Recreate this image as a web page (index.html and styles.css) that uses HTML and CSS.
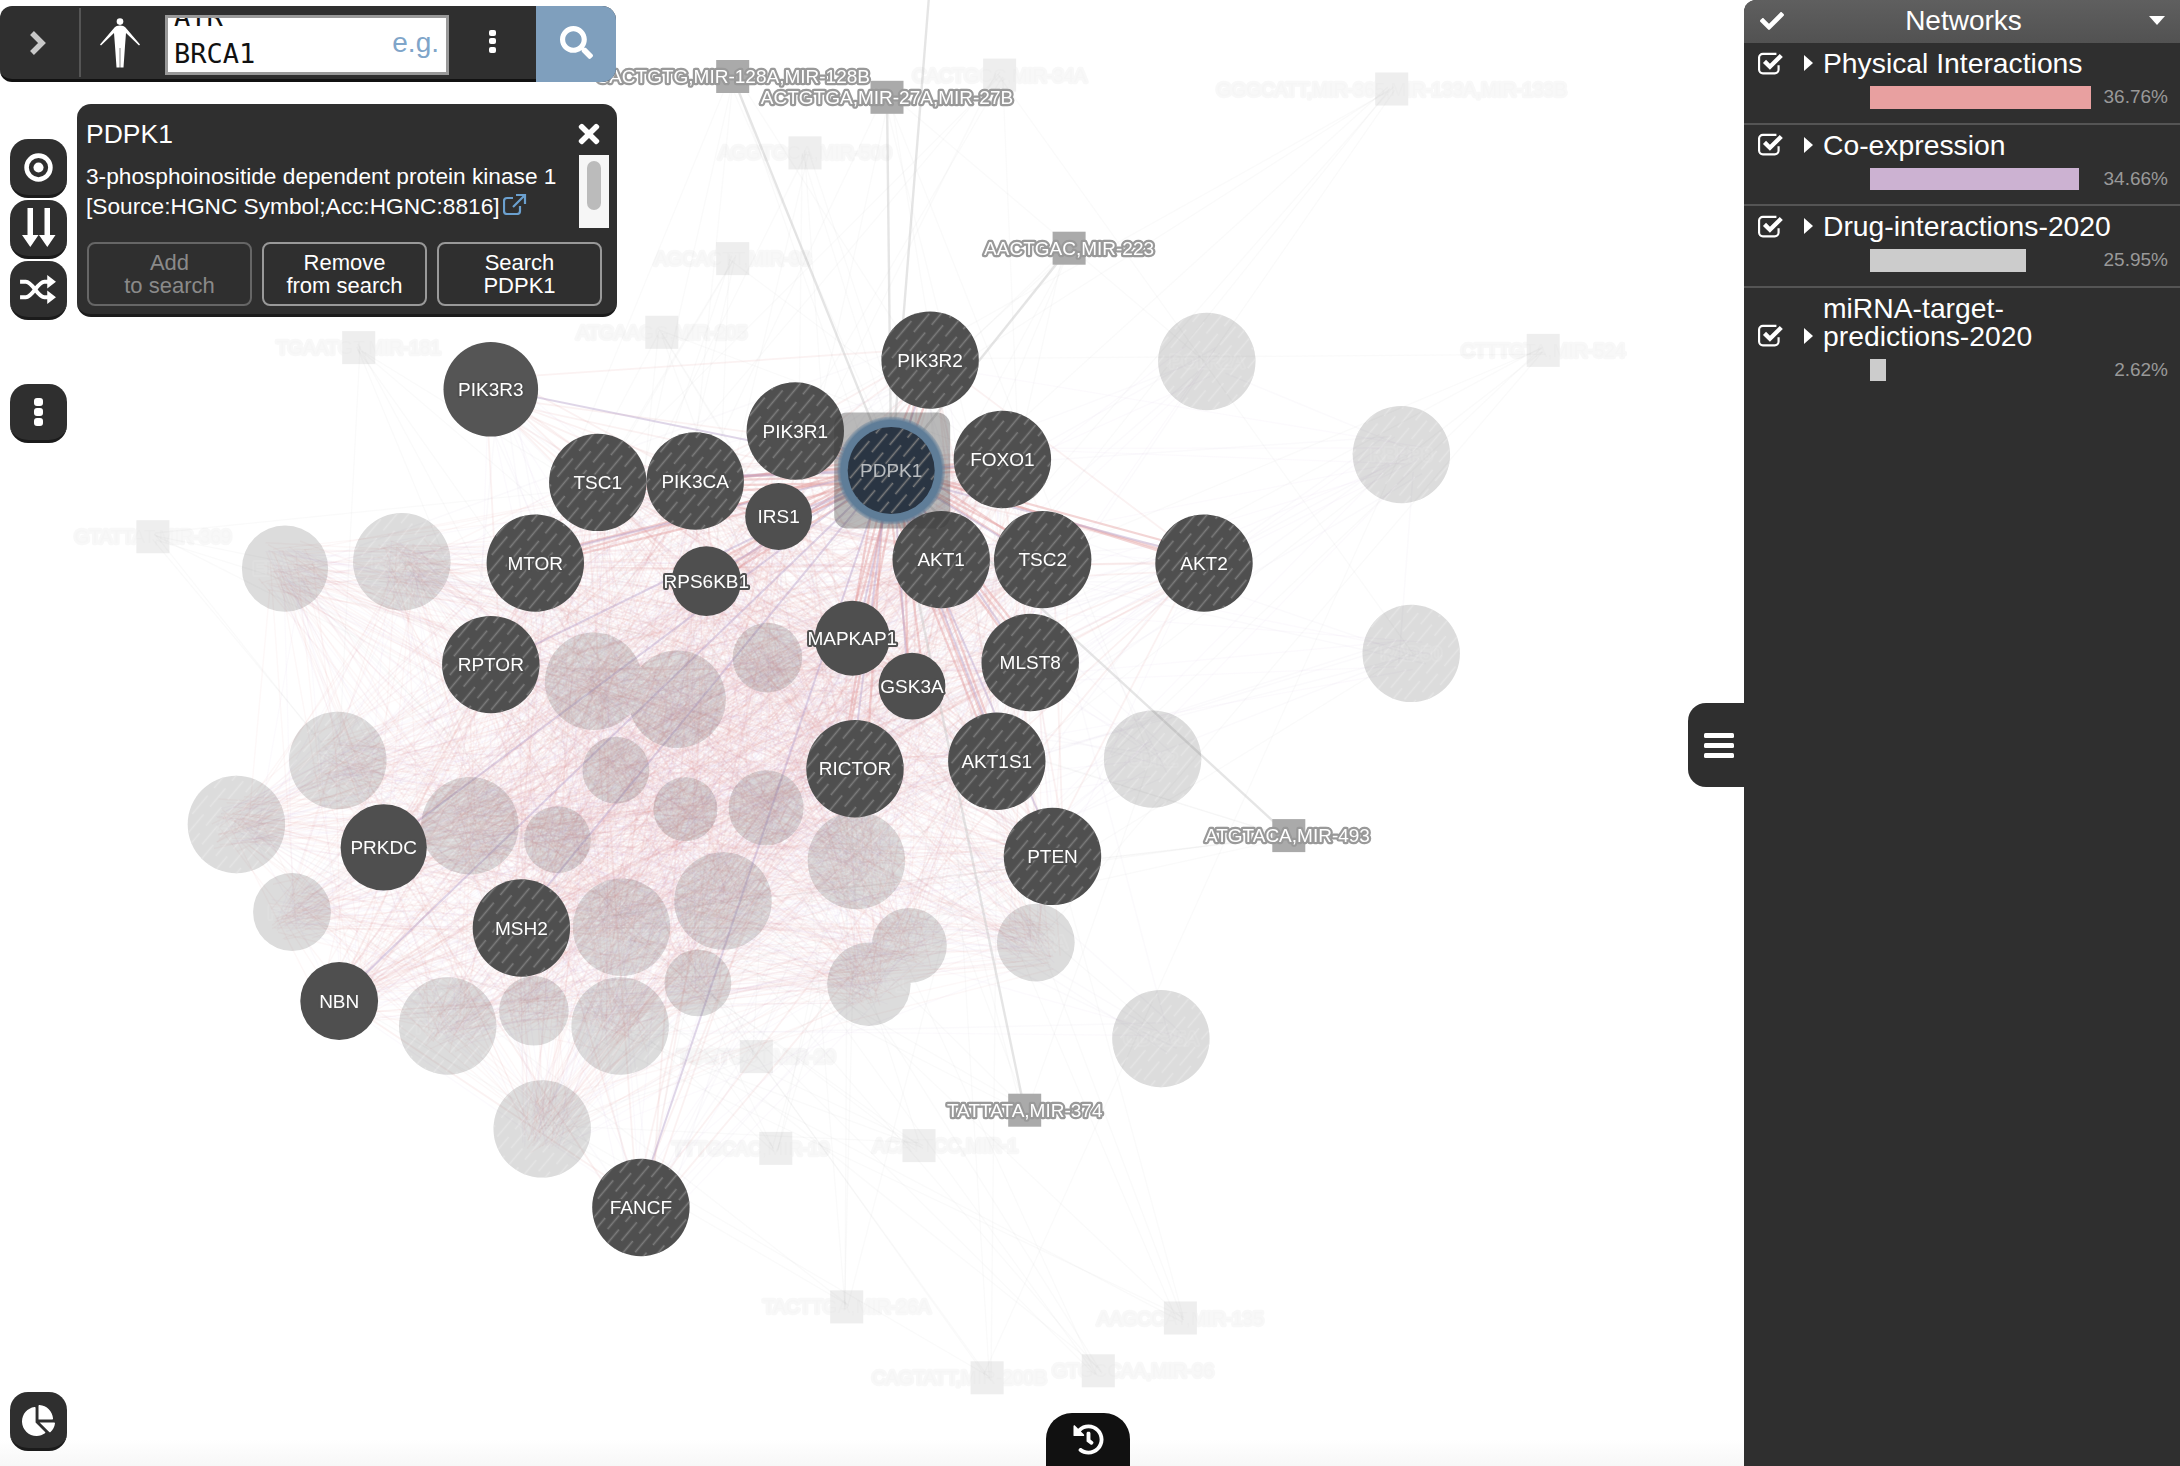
FILE: index.html
```html
<!DOCTYPE html>
<html lang="en">
<head>
<meta charset="utf-8">
<title>Network viewer</title>
<link rel="stylesheet" href="styles.css">
</head>
<body>
<div class="app">
  <main class="canvas">
    <svg id="graph" class="graph" width="1744" height="1466" xmlns="http://www.w3.org/2000/svg">
      <defs>
        <pattern id="hatch" width="18" height="34" patternUnits="userSpaceOnUse" patternTransform="rotate(40)">
          <line class="hatch-line" x1="4.5" y1="0" x2="4.5" y2="24"></line>
          <line class="hatch-line" x1="13.5" y1="17" x2="13.5" y2="41"></line>
          <line class="hatch-line" x1="13.5" y1="-17" x2="13.5" y2="7"></line>
        </pattern>
        <radialGradient id="halo">
          <stop offset="0.8" stop-color="#5f7d98"></stop>
          <stop offset="0.93" stop-color="#5f7d98"></stop>
          <stop offset="1" stop-color="#5f7d98" stop-opacity="0.25"></stop>
        </radialGradient>
      </defs>
    </svg>

    <div class="top-bar">
      <button class="bar-toggle" aria-label="Expand">
        <svg class="icon-chevron" viewBox="0 0 18 26"><path d="M3 3l10 10L3 23"></path></svg>
      </button>
      <button class="bar-organism" aria-label="Organism">
        <svg class="icon-person" viewBox="0 0 40 50"><circle cx="20" cy="3.6" r="3.3"></circle><path d="M20 7.5c-2.500 0-4.500.7-5.500 2L0 26.500l1 1L14 15l1 13 1.500 21.500h3.200L19.700 30h.6l0 19.500h3.200L25 28l1-13 13 12.500 1-1L25.500 9.500c-1-1.300-3-2-5.500-2z"></path></svg>
      </button>
      <div class="search-input">
        <div class="search-genes"><div>ATR</div><div>BRCA1</div></div>
        <span class="search-hint">e.g.</span>
      </div>
      <button class="bar-more" aria-label="Options"><i class="dot"></i><i class="dot"></i><i class="dot"></i></button>
      <button class="bar-search" aria-label="Search">
        <svg class="icon-search" viewBox="0 0 512 512"><path d="M505 442.7L405.3 343c-4.500-4.500-10.600-7-17-7H372c27.600-35.300 44-79.700 44-128C416 93.100 322.900 0 208 0S0 93.100 0 208s93.100 208 208 208c48.300 0 92.700-16.400 128-44v16.300c0 6.400 2.500 12.500 7 17l99.700 99.700c9.400 9.400 24.600 9.400 33.900 0l28.300-28.300c9.400-9.400 9.400-24.600.1-34zM208 336c-70.700 0-128-57.200-128-128 0-70.700 57.200-128 128-128 70.700 0 128 57.200 128 128 0 70.700-57.200 128-128 128z"></path></svg>
      </button>
    </div>

    <section class="gene-card">
      <header class="gene-head">
        <h1 class="gene-name">PDPK1</h1>
        <svg class="icon-close" viewBox="0 0 352 512"><path d="M242.720 256l100.070-100.070c12.280-12.280 12.280-32.190 0-44.480l-22.240-22.240c-12.280-12.280-32.190-12.280-44.480 0L176 189.280 75.930 89.210c-12.280-12.280-32.190-12.280-44.480 0L9.210 111.450c-12.280 12.280-12.280 32.190 0 44.480L109.280 256 9.210 356.070c-12.280 12.280-12.280 32.190 0 44.480l22.240 22.240c12.280 12.280 32.200 12.280 44.480 0L176 322.720l100.070 100.070c12.280 12.280 32.200 12.280 44.480 0l22.240-22.240c12.280-12.280 12.280-32.190 0-44.480L242.720 256z"></path></svg>
      </header>
      <div class="gene-body">
        <p class="gene-desc">3-phosphoinositide dependent protein kinase 1 [Source:HGNC Symbol;Acc:HGNC:8816]
          <svg class="icon-external" viewBox="0 0 24 21"><path d="M17 12v5a3 3 0 0 1-3 3H4a3 3 0 0 1-3-3V7a3 3 0 0 1 3-3h6"></path><path d="M13 1h9v9M22 1L10 13"></path></svg>
        </p>
        <div class="scroll-track"><div class="scroll-thumb"></div></div>
      </div>
      <div class="gene-actions">
        <button class="gene-btn is-disabled">Add<br>to search</button>
        <button class="gene-btn">Remove<br>from search</button>
        <button class="gene-btn">Search<br>PDPK1</button>
      </div>
    </section>

    <div class="tools">
      <button class="tool" aria-label="Focus">
        <svg class="tool-icon" viewBox="0 0 36 36"><circle class="ring" cx="18" cy="18" r="13"></circle><circle cx="18" cy="18" r="5.500"></circle></svg>
      </button>
      <button class="tool" aria-label="Sort">
        <svg class="tool-icon tool-icon-tall" viewBox="0 0 34 40"><path d="M5.500 0H11v27h5.500l-8.200 12L0 27h5.500zM22.500 0H28v27h5.500l-8.200 12L17 27h5.500z"></path></svg>
      </button>
      <button class="tool" aria-label="Shuffle">
        <svg class="tool-icon tool-icon-wide" viewBox="0 0 38 34"><path class="line" d="M0 9h6c7 0 12 16 19 16h6M0 25h6c7 0 12-16 19-16h6"></path><path d="M28 2l9 7-9 7zM28 18l9 7-9 7z"></path></svg>
      </button>
      <button class="tool tool-gap" aria-label="More"><i class="dot dot-lg"></i><i class="dot dot-lg"></i><i class="dot dot-lg"></i></button>
    </div>

    <button class="tool tool-chart" aria-label="Chart">
      <svg class="tool-icon" viewBox="0 0 544 512"><path d="M527.790 288H290.500l158.030 158.030c6.040 6.040 15.980 6.530 22.190.68 38.700-36.460 65.320-85.610 73.130-140.860 1.340-9.460-6.510-17.850-16.060-17.850zm-15.830-64.800C503.720 103.740 408.260 8.280 288.800.04 279.680-.59 272 7.100 272 16.240V240h223.770c9.140 0 16.820-7.680 16.190-16.800zM224 288V50.710c0-9.550-8.390-17.400-17.840-16.060C86.990 51.490-4.100 155.600.14 280.370 4.500 408.510 114.830 513.590 243.030 511.980c50.400-.63 96.970-16.870 135.260-44.030 7.900-5.600 8.420-17.230 1.570-24.080L224 288z"></path></svg>
    </button>

    <div class="page-fade"></div>

    <button class="history" aria-label="History">
      <svg class="icon-history" viewBox="0 0 512 512"><path d="M504 255.531c.253 136.640-111.180 248.372-247.820 248.468-59.015.042-113.223-20.530-155.822-54.911-11.077-8.940-11.905-25.541-1.839-35.607l11.267-11.267c8.609-8.609 22.353-9.551 31.891-1.984C173.062 425.135 212.781 440 256 440c101.705 0 184-82.311 184-184 0-101.705-82.311-184-184-184-48.814 0-93.149 18.969-126.068 49.932l50.754 50.754c10.080 10.080 2.941 27.314-11.313 27.314H24c-8.837 0-16-7.163-16-16V38.627c0-14.254 17.234-21.393 27.314-11.314l49.372 49.372C129.209 34.136 189.552 8 256 8c136.810 0 247.747 110.780 248 247.531zm-180.912 78.784l9.823-12.630c8.138-10.463 6.253-25.542-4.210-33.679L288 256.349V152c0-13.255-10.745-24-24-24h-16c-13.255 0-24 10.745-24 24v135.651l65.409 50.874c10.463 8.137 25.541 6.253 33.679-4.210z"></path></svg>
    </button>

    <button class="drawer-tab" aria-label="Toggle panel"><i></i><i></i><i></i></button>
  </main>

  <aside class="sidebar">
    <header class="side-head">
      <svg class="icon-check" viewBox="0 0 512 512"><path d="M173.898 439.404l-166.400-166.400c-9.997-9.997-9.997-26.206 0-36.204l36.203-36.204c9.997-9.998 26.207-9.998 36.204 0L192 312.690 432.095 72.596c9.997-9.997 26.207-9.997 36.204 0l36.203 36.204c9.997 9.997 9.997 26.206 0 36.204l-294.400 294.401c-9.998 9.997-26.207 9.997-36.204-.001z"></path></svg>
      <h2 class="side-title">Networks</h2>
      <span class="caret-down"></span>
    </header>

    <div class="net-row">
      <div class="net-name-line">
        <span class="net-check"><svg viewBox="0 0 24 22"><path class="box" d="M19 13v4a3.500 3.500 0 0 1-3.500 3.500h-11A3.500 3.500 0 0 1 1 17V6a3.500 3.500 0 0 1 3.500-3.500H17"></path><path class="tick" d="M6 9.500l5 5L21.500 4"></path></svg></span>
        <span class="net-arrow"><i></i></span>
        <span class="net-name">Physical Interactions</span>
      </div>
      <div class="net-bar-line"><span class="net-bar bar-physical" style="width:221px"></span><span class="net-pct">36.76%</span></div>
    </div>
    <div class="net-row">
      <div class="net-name-line">
        <span class="net-check"><svg viewBox="0 0 24 22"><path class="box" d="M19 13v4a3.500 3.500 0 0 1-3.500 3.500h-11A3.500 3.500 0 0 1 1 17V6a3.500 3.500 0 0 1 3.500-3.500H17"></path><path class="tick" d="M6 9.500l5 5L21.500 4"></path></svg></span>
        <span class="net-arrow"><i></i></span>
        <span class="net-name">Co-expression</span>
      </div>
      <div class="net-bar-line"><span class="net-bar bar-coexp" style="width:209px"></span><span class="net-pct">34.66%</span></div>
    </div>
    <div class="net-row">
      <div class="net-name-line">
        <span class="net-check"><svg viewBox="0 0 24 22"><path class="box" d="M19 13v4a3.500 3.500 0 0 1-3.500 3.500h-11A3.500 3.500 0 0 1 1 17V6a3.500 3.500 0 0 1 3.500-3.500H17"></path><path class="tick" d="M6 9.500l5 5L21.500 4"></path></svg></span>
        <span class="net-arrow"><i></i></span>
        <span class="net-name">Drug-interactions-2020</span>
      </div>
      <div class="net-bar-line"><span class="net-bar bar-grey" style="width:156px"></span><span class="net-pct">25.95%</span></div>
    </div>
    <div class="net-row net-row-last">
      <div class="net-name-line">
        <span class="net-check"><svg viewBox="0 0 24 22"><path class="box" d="M19 13v4a3.500 3.500 0 0 1-3.500 3.500h-11A3.500 3.500 0 0 1 1 17V6a3.500 3.500 0 0 1 3.500-3.500H17"></path><path class="tick" d="M6 9.500l5 5L21.500 4"></path></svg></span>
        <span class="net-arrow"><i></i></span>
        <span class="net-name">miRNA-target-predictions-2020</span>
      </div>
      <div class="net-bar-line"><span class="net-bar bar-grey" style="width:16px"></span><span class="net-pct">2.62%</span></div>
    </div>
  </aside>
</div>
<script src="graph.js"></script>
</body>
</html>
```

FILE: styles.css
```css
* { box-sizing: border-box; }
html, body { margin: 0; height: 100%; }
body {
  background: #fff;
  color: #fff;
  font-family: "Liberation Sans", Arial, sans-serif;
  overflow: hidden;
}
button {
  font: inherit;
  color: inherit;
  border: 0;
  padding: 0;
  background: none;
}
.app { display: flex; width: 2180px; height: 1466px; }
.canvas { position: relative; flex: 1; min-width: 0; overflow: hidden; }
.graph { position: absolute; inset: 0; display: block; }

/* graph */
.hatch-line { stroke: #7c7c7c; stroke-width: 1.6; }
.edge { fill: none; }
.mesh-pink { stroke: #e79a9a; stroke-width: 1.4; opacity: .07; }
.mesh-purple { stroke: #c3a6d2; stroke-width: 1.3; opacity: .055; }
.mesh-sparse { stroke: #cbb8d8; stroke-width: 1.5; opacity: .07; }
.mesh-grey { stroke: #bbb; stroke-width: 1.3; opacity: .08; }
.link-pink { stroke: #e39a9c; stroke-width: 2.2; opacity: .42; }
.link-pink-soft { stroke: #e39a9c; stroke-width: 1.8; opacity: .13; }
.link-purple { stroke: #b9a3cb; stroke-width: 2; opacity: .45; }
.link-grey { stroke: #c8c8c8; stroke-width: 2.4; opacity: .48; }
.node-fill { fill: #4f4f4f; }
.node-light { fill: #555; }
.node-hatch { fill: url(#hatch); }
.node-label {
  fill: #fff;
  font-size: 19px;
  text-anchor: middle;
  dominant-baseline: central;
  stroke: #4f4f4f;
  stroke-width: 4px;
  stroke-linejoin: round;
  paint-order: stroke;
}
.faded { opacity: .2; }
.faded .node-label { fill: #4f4f4f; stroke: #8a8a8a; opacity: .28; }
.faded-mirna { opacity: .2; }
.faded-mirna .mirna-label { fill: #8a8a8a; stroke: #aaa; opacity: .4; }
.mirna-box { fill: #aaa; }
.mirna-label {
  fill: #fff;
  font-size: 19px;
  text-anchor: middle;
  dominant-baseline: central;
  stroke: #999;
  stroke-width: 4.5px;
  stroke-linejoin: round;
  paint-order: stroke;
}
.selection { fill: rgba(60, 60, 60, .36); }
.focus-halo { fill: url(#halo); }
.focus-fill { fill: #2a3543; }
.focus-label { fill: #b9bdc1; stroke: none; }

/* search bar */
.top-bar {
  position: absolute;
  left: 0;
  top: 6px;
  width: 616px;
  height: 76px;
  display: flex;
  background: #2f2f2f;
  border-bottom: 3px solid #111;
  border-radius: 12px 14px 14px 12px;
  z-index: 3;
}
.bar-toggle {
  width: 81px;
  flex: none;
  display: flex;
  align-items: center;
  justify-content: center;
  border-right: 2px solid #555;
  margin: 2px 0;
}
.icon-chevron { width: 18px; height: 26px; margin-left: -3px; }
.icon-chevron path { fill: none; stroke: #c8c8c8; stroke-width: 5.5; }
.bar-organism {
  width: 84px;
  flex: none;
  display: flex;
  align-items: center;
  justify-content: center;
  padding-right: 6px;
}
.icon-person { width: 40px; height: 50px; fill: #fff; }
.search-input {
  width: 284px;
  height: 60px;
  flex: none;
  margin-top: 9px;
  display: flex;
  justify-content: space-between;
  align-items: flex-end;
  background: #fff;
  border: 3px solid #999;
  overflow: hidden;
  padding: 0 7px 0 6px;
}
.search-genes {
  color: #111;
  font-family: "DejaVu Sans Mono", monospace;
  font-size: 27px;
  line-height: 37px;
  flex: none;
}
.search-hint {
  color: #7fa5c9;
  font-size: 28px;
  line-height: 36px;
  padding-bottom: 4px;
  align-self: center;
}
.bar-more {
  width: 87px;
  flex: none;
  display: flex;
  flex-direction: column;
  align-items: center;
  justify-content: center;
  gap: 2.5px;
  padding-bottom: 3px;
}
.dot { display: block; width: 7px; height: 6px; background: #fff; border-radius: 2px; }
.dot-lg { width: 9px; height: 8px; border-radius: 3px; }
.bar-search {
  flex: 1;
  background: #7f9fbd;
  display: flex;
  align-items: center;
  justify-content: center;
  border-radius: 0 14px 14px 0;
  margin-bottom: -3px;
  padding-bottom: 4px;
}
.icon-search { width: 33px; height: 33px; fill: #fff; }

/* gene card */
.gene-card {
  position: absolute;
  left: 77px;
  top: 104px;
  width: 540px;
  height: 213px;
  background: #2f2f2f;
  border-bottom: 3px solid #1b1b1b;
  border-radius: 14px;
  padding: 0 12px 0 9px;
  display: flex;
  flex-direction: column;
  z-index: 3;
}
.gene-head {
  height: 51px;
  display: flex;
  align-items: center;
  justify-content: space-between;
  padding-top: 8px;
}
.gene-name { margin: 0; font-size: 26.500px; font-weight: 400; line-height: 30px; }
.icon-close { width: 24px; height: 30px; fill: #fff; margin-right: 4px; }
.gene-body { display: flex; justify-content: space-between; height: 87px; }
.gene-desc {
  margin: 0;
  width: 484px;
  font-size: 22.700px;
  line-height: 30px;
  padding-top: 6px;
}
.icon-external {
  width: 24px;
  height: 21px;
  vertical-align: -1px;
  margin-left: -3px;
}
.icon-external path { fill: none; stroke: #6ba0cf; stroke-width: 2.200; }
.scroll-track {
  width: 30px;
  height: 73px;
  margin-right: -4px;
  padding: 6px 8px;
  background: #f6f6f6;
}
.scroll-thumb { height: 49px; border-radius: 8px; background: #bbb; }
.gene-actions { display: flex; gap: 10px; margin-top: 0; padding-left: 1px; }
.gene-btn {
  width: 165px;
  height: 64px;
  border: 2.500px solid #999;
  border-radius: 8px;
  font-size: 22px;
  line-height: 23.500px;
  text-align: center;
}
.gene-btn.is-disabled { color: #8a8a8a; border-color: #666; }

/* left tools */
.tools {
  position: absolute;
  left: 10px;
  top: 139px;
  display: flex;
  flex-direction: column;
  gap: 2px;
  z-index: 3;
}
.tool {
  width: 57px;
  height: 59px;
  display: flex;
  flex-direction: column;
  align-items: center;
  justify-content: center;
  gap: 2px;
  background: #2f2f2f;
  border-bottom: 3px solid #1b1b1b;
  border-radius: 18px;
}
.tool-gap { margin-top: 62px; }
.tool-chart { position: absolute; left: 10px; bottom: 15px; z-index: 3; }
.tool-icon { width: 33px; height: 33px; fill: #fff; }
.tool-icon-tall { width: 34px; height: 40px; }
.tool-icon-wide { width: 37px; height: 33px; }
.tool-icon .ring { fill: none; stroke: #fff; stroke-width: 5; }
.tool-icon .line { fill: none; stroke: #fff; stroke-width: 4; }

/* overlays */
.page-fade {
  position: absolute;
  left: 0;
  right: 0;
  bottom: 0;
  height: 26px;
  background: linear-gradient(rgba(247, 247, 247, 0), #f7f7f7);
  z-index: 1;
}
.history {
  position: absolute;
  left: 1046px;
  bottom: 0;
  width: 84px;
  height: 53px;
  background: #111;
  border-radius: 26px 26px 0 0;
  display: flex;
  align-items: center;
  justify-content: center;
  z-index: 2;
}
.icon-history { width: 31px; height: 31px; fill: #fff; }
.drawer-tab {
  position: absolute;
  right: 0;
  top: 703px;
  width: 56px;
  height: 84px;
  background: #2f2f2f;
  border-radius: 18px 0 0 18px;
  display: flex;
  flex-direction: column;
  align-items: center;
  justify-content: center;
  gap: 5px;
  padding-left: 6px;
  z-index: 3;
}
.drawer-tab i { display: block; width: 30px; height: 5px; background: #fff; border-radius: 1.500px; }

/* sidebar */
.sidebar {
  width: 436px;
  flex: none;
  background: #2f2f2f;
  border-top-left-radius: 12px;
  overflow: hidden;
}
.side-head {
  height: 43px;
  display: flex;
  align-items: center;
  background: linear-gradient(#5f5f5f, #525252);
  padding: 0 15px 2px 16px;
}
.icon-check { width: 24px; height: 24px; fill: #fff; flex: none; }
.side-title { flex: 1; margin: 0; text-align: center; font-size: 28px; font-weight: 400; line-height: 40px; padding-right: 6px; }
.caret-down {
  width: 0;
  height: 0;
  border-left: 8px solid transparent;
  border-right: 8px solid transparent;
  border-top: 9px solid #fff;
  flex: none;
}
.net-row { padding: 6px 12px 14px 14px; border-bottom: 2px solid #555; }
.net-row-last { border-bottom: 0; }
.net-name-line { display: flex; align-items: flex-end; }
.net-check { width: 26px; height: 28px; margin-right: 20px; flex: none; display: flex; align-items: center; padding-bottom: 1px; }
.net-check svg { width: 26px; height: 24px; }
.net-check .box { fill: none; stroke: #fff; stroke-width: 2; }
.net-check .tick { fill: none; stroke: #fff; stroke-width: 4; }
.net-arrow { width: 10px; height: 28px; margin-right: 9px; flex: none; display: flex; align-items: center; }
.net-arrow i {
  display: block;
  width: 0;
  height: 0;
  border-top: 8px solid transparent;
  border-bottom: 8px solid transparent;
  border-left: 9px solid #fff;
}
.net-name { font-size: 28.300px; line-height: 28px; max-width: 300px; }
.net-bar-line { display: flex; align-items: center; margin-top: 9px; height: 22.500px; }
.net-bar { display: block; height: 22.500px; margin-left: 112px; }
.bar-physical { background: #e8a0a0; }
.bar-coexp { background: #ccb2d2; }
.bar-grey { background: #ccc; }
.net-pct { margin-left: auto; color: #999; font-size: 19px; line-height: 20px; }
```

FILE: graph.js
```js
// Draws the gene network. Coordinates are given on a 1568-wide grid.
(function () {
  var SCALE = 2180 / 1568;
  var NS = 'http://www.w3.org/2000/svg';
  var svg = document.getElementById('graph');

  // label, x, y, radius, hatched
  var genes = [
    ['PIK3R3', 353, 280, 34, 0], ['PIK3R2', 669, 259, 35, 1], ['PIK3R1', 572, 310, 35, 1],
    ['FOXO1', 721, 330.5, 35, 1], ['TSC1', 430, 347, 35, 1], ['PIK3CA', 500, 346, 35, 1],
    ['IRS1', 560, 371.5, 24, 0], ['AKT1', 677, 402.5, 35, 1], ['TSC2', 750, 402.5, 35, 1],
    ['AKT2', 866, 405, 35, 1], ['MTOR', 385, 405, 35, 1], ['RPS6KB1', 508, 418, 25, 0],
    ['RPTOR', 353, 478, 35, 1], ['MAPKAP1', 613, 459, 27, 0], ['GSK3A', 656, 493.5, 24, 0],
    ['MLST8', 741, 476.5, 35, 1], ['RICTOR', 615, 553, 35, 1], ['AKT1S1', 717, 547.5, 35, 1],
    ['PTEN', 757, 616, 35, 1], ['PRKDC', 276, 609.5, 31, 0], ['MSH2', 375, 667.5, 35, 1],
    ['NBN', 244, 720, 28, 0], ['FANCF', 461, 868.5, 35, 1]
  ];
  var fadedGenes = [
    ['POLR2A', 868, 260, 35, 1], ['RBBP8', 1008, 327, 35, 1], ['RAD50', 1015, 470, 35, 1],
    ['ERCC4', 205, 409, 31, 0], ['RAD51', 289, 404, 35, 1], ['BRCA2', 427, 490, 35, 1],
    ['CHEK1', 487, 503, 35, 1], ['MDC1', 552, 473, 25, 0], ['TP53', 243, 547, 35, 1],
    ['CDK2', 829, 546, 35, 1], ['XRCC6', 443, 554, 24, 0], ['ATR', 170, 593, 35, 1],
    ['BRCA1', 338, 594, 35, 1], ['RPA1', 493, 582, 23, 0], ['PALB2', 551, 581, 27, 0],
    ['FANCD2', 401, 604, 24, 0], ['CLSPN', 616, 619, 35, 1], ['FEN1', 210, 656, 28, 0],
    ['MLH1', 447, 667, 35, 1], ['MSH6', 520, 648, 35, 1], ['HUS1', 654, 680, 27, 0],
    ['RAD9A', 745, 678, 28, 0], ['TOPBP1', 625, 708, 30, 0], ['ATRIP', 502, 707, 24, 0],
    ['FANCA', 322, 738, 35, 1], ['EXO1', 384, 727, 25, 0], ['BARD1', 446, 738, 35, 1],
    ['CDC25A', 835, 747, 35, 1], ['WRN', 390, 812, 35, 1]
  ];
  var mirnas = [
    ['CACTGTG,MIR-128A,MIR-128B', 527, 55, 527], ['ACTGTGA,MIR-27A,MIR-27B', 638, 70, 638],
    ['AACTGAC,MIR-223', 769, 178.5, 769], ['ATGTACA,MIR-493', 927, 601, 926],
    ['TATTATA,MIR-374', 737, 798.5, 737]
  ];
  var fadedMirnas = [
    ['CACTGCC,MIR-34A', 719, 54, 719], ['GGGCATT,MIR-365,MIR-133A,MIR-133B', 1001, 64, 1001],
    ['AGGTGCA,MIR-500', 579, 110, 579], ['AGCACTT,MIR-93', 527, 186, 527],
    ['ATGAAGG,MIR-205', 476, 239, 476], ['TGAATGT,MIR-181', 258, 250, 258],
    ['CTTTGTA,MIR-524', 1110, 252, 1110], ['GTATTAT,MIR-369', 110, 386, 110],
    ['TGGTGCT,MIR-29', 544, 760, 544], ['TTTGCAC,MIR-19', 558, 826, 540],
    ['ACATTCC,MIR-1', 661, 824, 680], ['TACTTGA,MIR-26A', 609, 940, 609],
    ['AAGCCAT,MIR-135', 849, 948, 849], ['CAGTATT,MIR-200B', 710, 991, 690],
    ['GTGCCAA,MIR-96', 790, 986, 815]
  ];
  var focus = { x: 641, y: 338.5 };

  var seed = 20200;
  function rnd() {
    seed = (seed + 0x6D2B79F5) | 0;
    var t = Math.imul(seed ^ (seed >>> 15), 1 | seed);
    t = (t + Math.imul(t ^ (t >>> 7), 61 | t)) ^ t;
    return ((t ^ (t >>> 14)) >>> 0) / 4294967296;
  }

  function el(parent, name, attrs, text) {
    var node = document.createElementNS(NS, name);
    for (var key in attrs) node.setAttribute(key, attrs[key]);
    if (text) node.textContent = text;
    parent.appendChild(node);
    return node;
  }
  function px(v) { return (v * SCALE).toFixed(1); }
  function edge(parent, ax, ay, bx, by, cls, spread) {
    var s = spread || 0;
    el(parent, 'line', {
      x1: px(ax + (rnd() - .5) * s), y1: px(ay + (rnd() - .5) * s),
      x2: px(bx + (rnd() - .5) * s), y2: px(by + (rnd() - .5) * s),
      'class': 'edge ' + cls
    });
  }
  function inCluster(n) { return n[1] < 800 && n[2] > 330 && n[2] < 840; }

  var edges = el(svg, 'g', {});
  var all = genes.concat(fadedGenes);

  // faint background mesh
  all.forEach(function (a, i) {
    all.slice(i + 1).forEach(function (b) {
      var both = inCluster(a) && inCluster(b);
      if (rnd() < (both ? .95 : .16)) edge(edges, a[1], a[2], b[1], b[2], both ? 'mesh-pink' : 'mesh-sparse', 30);
      if (rnd() < (both ? .85 : .1)) edge(edges, a[1], a[2], b[1], b[2], 'mesh-purple', 30);
      if (both && rnd() < .6) edge(edges, a[1], a[2], b[1], b[2], 'mesh-pink', 40);
    });
  });

  // microRNA targets, faint
  mirnas.concat(fadedMirnas).forEach(function (m) {
    for (var k = 0; k < 6; k++) {
      var g = all[Math.floor(rnd() * all.length)];
      edge(edges, m[1], m[2], g[1], g[2], 'mesh-grey', 6);
    }
  });

  // stronger links among the query-related nodes
  genes.forEach(function (a, i) {
    genes.slice(i + 1).forEach(function (b) {
      if (rnd() < .5) edge(edges, a[1], a[2], b[1], b[2], 'link-pink-soft', 20);
    });
  });

  // links from the selected node
  genes.forEach(function (g) {
    var d = Math.hypot(g[1] - focus.x, g[2] - focus.y);
    var pink = d < 280 ? 3 : 0;
    for (var k = 0; k < pink; k++) edge(edges, focus.x, focus.y, g[1], g[2], 'link-pink', 18);
    edge(edges, focus.x, focus.y, g[1], g[2], 'link-purple', 8);
  });
  mirnas.forEach(function (m) { edge(edges, focus.x, focus.y, m[1], m[2], 'link-grey', 0); });
  edge(edges, focus.x, focus.y, 668, 0, 'link-grey', 0);

  function drawGene(parent, g) {
    var cx = px(g[1]), cy = px(g[2]), r = px(g[3]);
    var group = el(parent, 'g', {});
    el(group, 'circle', { cx: cx, cy: cy, r: r, 'class': g[0] === 'PIK3R3' ? 'node-light' : 'node-fill' });
    if (g[4]) el(group, 'circle', { cx: cx, cy: cy, r: r, 'class': 'node-hatch' });
    el(group, 'text', { x: cx, y: cy, 'class': 'node-label' }, g[0]);
  }
  function drawMirna(parent, m) {
    var cx = m[1] * SCALE, cy = m[2] * SCALE;
    el(parent, 'rect', { x: (cx - 16.5).toFixed(1), y: (cy - 16.5).toFixed(1), width: 33, height: 33, 'class': 'mirna-box' });
    el(parent, 'text', { x: px(m[3]), y: cy.toFixed(1), 'class': 'mirna-label' }, m[0]);
  }

  var fadedM = el(svg, 'g', { 'class': 'faded-mirna' });
  fadedMirnas.forEach(function (m) { drawMirna(fadedM, m); });
  var fadedG = el(svg, 'g', { 'class': 'faded' });
  fadedGenes.forEach(function (g) { drawGene(fadedG, g); });
  var solidM = el(svg, 'g', {});
  mirnas.forEach(function (m) { drawMirna(solidM, m); });
  var solidG = el(svg, 'g', {});
  genes.forEach(function (g) { drawGene(solidG, g); });

  // selected node on top
  var fx = focus.x * SCALE, fy = focus.y * SCALE;
  el(svg, 'rect', { x: (fx - 57).toFixed(1), y: (fy - 58).toFixed(1), width: 116, height: 116, rx: 13, 'class': 'selection' });
  el(svg, 'circle', { cx: fx, cy: fy, r: 54, 'class': 'focus-halo' });
  el(svg, 'circle', { cx: fx, cy: fy, r: 43.5, 'class': 'focus-fill' });
  el(svg, 'circle', { cx: fx, cy: fy, r: 43.5, 'class': 'node-hatch' });
  el(svg, 'text', { x: fx, y: fy, 'class': 'node-label focus-label' }, 'PDPK1');
})();
```
